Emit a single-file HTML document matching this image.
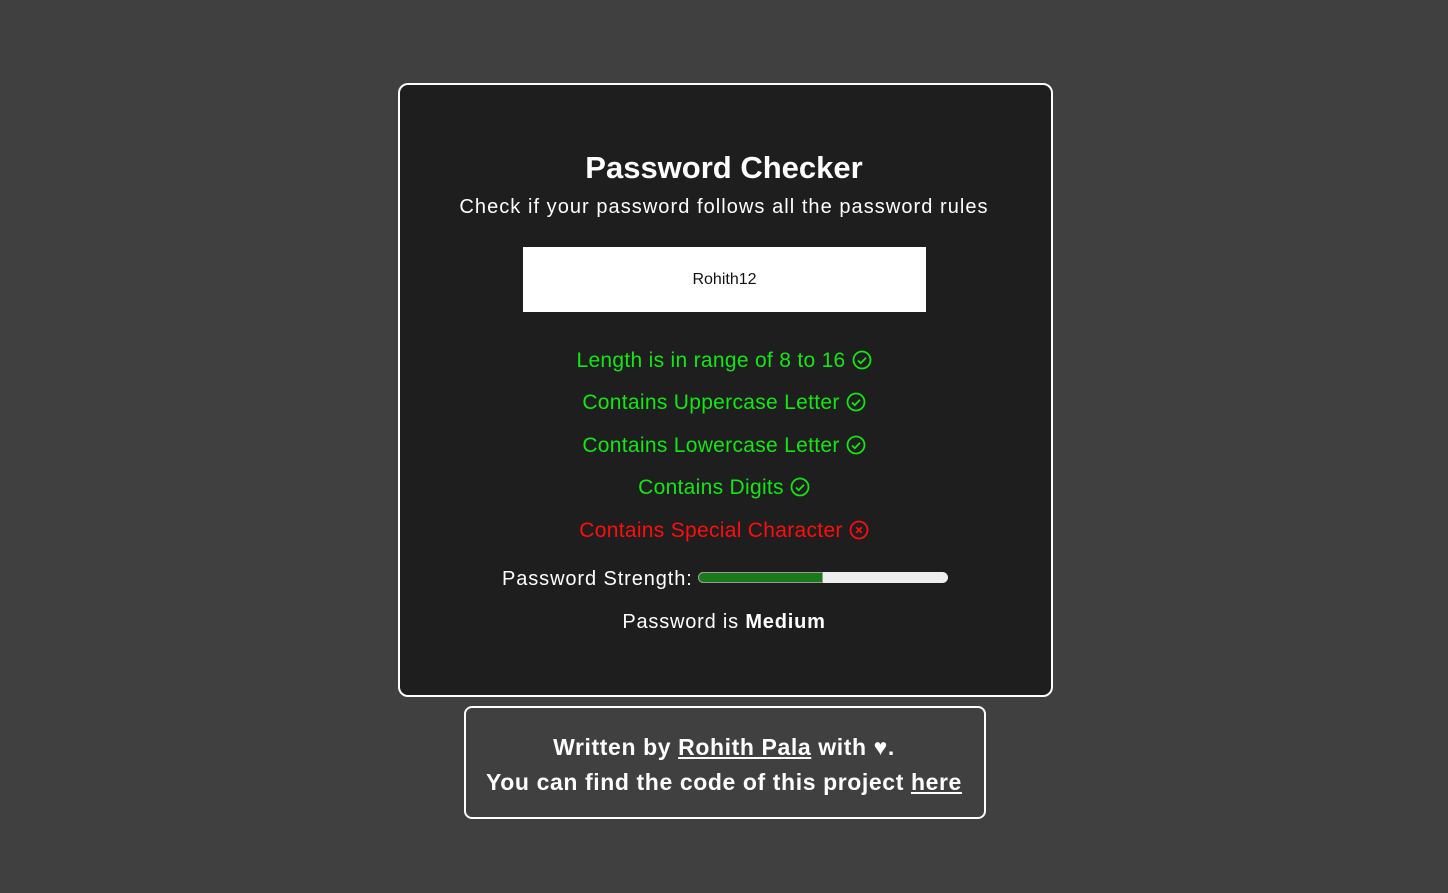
<!DOCTYPE html>
<html><head><style>
body{margin:0;width:1448px;height:893px;background:#404040;font-family:"Liberation Sans",sans-serif;position:relative;overflow:hidden;color:#fff}
.card{position:absolute;left:398px;top:83px;width:651px;height:610px;background:#1e1e1e;border:2px solid #fff;border-radius:10px}
.t{position:absolute;left:0;width:1448px;text-align:center;white-space:nowrap}
.g{color:#14e614;font-size:21px;letter-spacing:0.3px}
.r{color:#ff0d0d;font-size:21px;letter-spacing:0.3px}
svg{vertical-align:-3px;margin-left:6px}
.foot{position:absolute;left:464px;top:706px;width:518px;height:109px;border:2px solid #fff;border-radius:8px}
</style></head><body>
<div class="card"></div>
<div class="t" style="top:150px;font-size:31px;font-weight:bold">Password Checker</div>
<div class="t" style="top:196px;font-size:20px;letter-spacing:1.05px">Check if your password follows all the password rules</div>
<div style="position:absolute;left:523px;top:247px;width:403px;height:65px;background:#fff;color:#111;font-size:16px;text-align:center;line-height:65px">Rohith12</div>
<div class="t g" style="top:349px">Length is in range of 8 to 16<svg width="20" height="20" viewBox="0 0 20 20"><circle cx="10" cy="10" r="8.5" fill="none" stroke="#14e614" stroke-width="1.8"/><path d="M6 10.5l2.7 2.7 5.3-5.5" fill="none" stroke="#14e614" stroke-width="1.8"/></svg></div>
<div class="t g" style="top:391px">Contains Uppercase Letter<svg width="20" height="20" viewBox="0 0 20 20"><circle cx="10" cy="10" r="8.5" fill="none" stroke="#14e614" stroke-width="1.8"/><path d="M6 10.5l2.7 2.7 5.3-5.5" fill="none" stroke="#14e614" stroke-width="1.8"/></svg></div>
<div class="t g" style="top:434px">Contains Lowercase Letter<svg width="20" height="20" viewBox="0 0 20 20"><circle cx="10" cy="10" r="8.5" fill="none" stroke="#14e614" stroke-width="1.8"/><path d="M6 10.5l2.7 2.7 5.3-5.5" fill="none" stroke="#14e614" stroke-width="1.8"/></svg></div>
<div class="t g" style="top:476px">Contains Digits<svg width="20" height="20" viewBox="0 0 20 20"><circle cx="10" cy="10" r="8.5" fill="none" stroke="#14e614" stroke-width="1.8"/><path d="M6 10.5l2.7 2.7 5.3-5.5" fill="none" stroke="#14e614" stroke-width="1.8"/></svg></div>
<div class="t r" style="top:519px">Contains Special Character<svg width="20" height="20" viewBox="0 0 20 20"><circle cx="10" cy="10" r="8.5" fill="none" stroke="#ff0d0d" stroke-width="1.8"/><path d="M7.3 7.3l5.4 5.4M12.7 7.3l-5.4 5.4" fill="none" stroke="#ff0d0d" stroke-width="1.8"/></svg></div>
<div style="position:absolute;left:502px;top:568px;font-size:20px;white-space:nowrap;letter-spacing:0.9px">Password Strength:</div>
<div style="position:absolute;left:698px;top:572px;width:250px;height:11px;background:#eee;border-radius:6px;overflow:hidden"><div style="width:125px;height:11px;background:#1a7a1a;border:1px solid #999;box-sizing:border-box;border-radius:6px 0 0 6px"></div></div>
<div class="t" style="top:611px;font-size:20px;letter-spacing:0.8px">Password is <b>Medium</b></div>
<div class="foot"></div>
<div class="t" style="top:734px;font-size:23px;font-weight:bold;letter-spacing:0.6px">Written by <u>Rohith Pala</u> with ♥.</div>
<div class="t" style="top:769px;font-size:23px;font-weight:bold;letter-spacing:0.6px">You can find the code of this project <u>here</u></div>
</body></html>
